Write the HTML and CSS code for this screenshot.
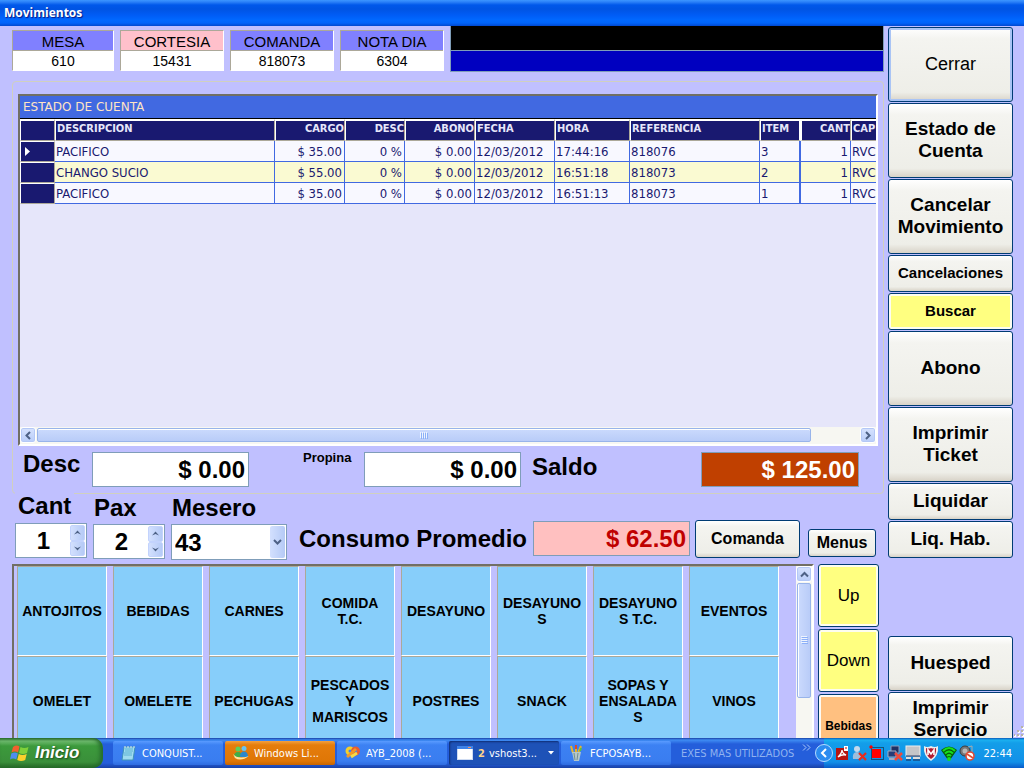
FILE: index.html
```html
<!DOCTYPE html>
<html lang="es">
<head>
<meta charset="utf-8">
<title>Movimientos</title>
<link rel="stylesheet" href="styles.css">
</head>
<body>
<header class="titlebar">Movimientos</header>

<main class="window">
  <div class="work">
    <section class="summary">
      <dl class="tag tag-w1"><dt>MESA</dt><dd>610</dd></dl>
      <dl class="tag tag-pink"><dt>CORTESIA</dt><dd>15431</dd></dl>
      <dl class="tag"><dt>COMANDA</dt><dd>818073</dd></dl>
      <dl class="tag"><dt>NOTA DIA</dt><dd>6304</dd></dl>
      <div class="display"><div class="display-top"></div><div class="display-bottom"></div></div>
    </section>

    <section class="group">
      <div class="grid">
        <div class="grid-caption">ESTADO DE CUENTA</div>
        <div class="grid-view">
          <table class="rows">
            <colgroup><col class="c-head"><col class="c-desc"><col class="c-70"><col class="c-60"><col class="c-70"><col class="c-80"><col class="c-75"><col class="c-130"><col class="c-item"><col class="c-cant"><col class="c-70"></colgroup>
            <thead>
              <tr><th></th><th>DESCRIPCION</th><th class="num">CARGO</th><th class="num">DESC</th><th class="num">ABONO</th><th>FECHA</th><th>HORA</th><th>REFERENCIA</th><th class="thick">ITEM</th><th class="num">CANT</th><th>CAP</th></tr>
            </thead>
            <tbody>
              <tr><th><svg class="marker" width="5" height="9" viewBox="0 0 5 9"><path d="M0 0L5 4.500L0 9Z" fill="#fff"/></svg></th><td>PACIFICO</td><td class="num">$ 35.00</td><td class="num">0 %</td><td class="num">$ 0.00</td><td>12/03/2012</td><td>17:44:16</td><td>818076</td><td class="thick">3</td><td class="num">1</td><td>RVC</td></tr>
              <tr><th></th><td>CHANGO SUCIO</td><td class="num">$ 55.00</td><td class="num">0 %</td><td class="num">$ 0.00</td><td>12/03/2012</td><td>16:51:18</td><td>818073</td><td class="thick">2</td><td class="num">1</td><td>RVC</td></tr>
              <tr><th></th><td>PACIFICO</td><td class="num">$ 35.00</td><td class="num">0 %</td><td class="num">$ 0.00</td><td>12/03/2012</td><td>16:51:13</td><td>818073</td><td class="thick">1</td><td class="num">1</td><td>RVC</td></tr>
            </tbody>
          </table>
        </div>
        <div class="hscroll">
          <button class="sbtn" aria-label="Izquierda"><svg width="8" height="9" viewBox="0 0 8 9"><path d="M6 1L2.500 4.500L6 8" class="chev"/></svg></button>
          <div class="hthumb"><svg width="9" height="7" viewBox="0 0 9 7"><path d="M.5 0V6M2.500 0V6M4.500 0V6M6.500 0V6" stroke="#eef4fe"/><path d="M1.500 1V7M3.500 1V7M5.500 1V7M7.500 1V7" stroke="#8cb0f8"/></svg></div>
          <div class="hspace"></div>
          <button class="sbtn" aria-label="Derecha"><svg width="8" height="9" viewBox="0 0 8 9"><path d="M2 1L5.500 4.500L2 8" class="chev"/></svg></button>
        </div>
      </div>

      <div class="totals">
        <label class="big lbl-desc" for="desc">Desc</label>
        <input class="money" id="desc" value="$ 0.00">
        <label class="small lbl-propina" for="propina">Propina</label>
        <input class="money" id="propina" value="$ 0.00">
        <label class="big lbl-saldo" for="saldo">Saldo</label>
        <input class="money saldo" id="saldo" value="$ 125.00">
      </div>
    </section>

    <section class="order">
      <div class="field field-cant">
        <label class="big" for="cant">Cant</label>
        <div class="spin"><input id="cant" type="number" value="1">
          <div class="spin-btns"><button aria-label="Más"><svg width="7" height="5" viewBox="0 0 7 5"><path d="M0 4.500L3.500 .5L7 4.500L3.500 3Z" fill="#4d6185"/></svg></button><button aria-label="Menos"><svg width="7" height="5" viewBox="0 0 7 5"><path d="M0 .5L3.500 4.500L7 .5L3.500 2Z" fill="#4d6185"/></svg></button></div></div>
      </div>
      <div class="field field-pax">
        <label class="big" for="pax">Pax</label>
        <div class="spin"><input id="pax" type="number" value="2">
          <div class="spin-btns"><button aria-label="Más"><svg width="7" height="5" viewBox="0 0 7 5"><path d="M0 4.500L3.500 .5L7 4.500L3.500 3Z" fill="#4d6185"/></svg></button><button aria-label="Menos"><svg width="7" height="5" viewBox="0 0 7 5"><path d="M0 .5L3.500 4.500L7 .5L3.500 2Z" fill="#4d6185"/></svg></button></div></div>
      </div>
      <div class="field">
        <label class="big" for="mesero">Mesero</label>
        <div class="combo"><select id="mesero"><option>43</option></select><span class="combo-btn"><svg width="9" height="7" viewBox="0 0 9 7"><path d="M1 1L4.500 4.500L8 1" class="chev"/></svg></span></div>
      </div>
      <label class="big lbl-consumo" for="consumo">Consumo Promedio</label>
      <input class="money consumo" id="consumo" value="$ 62.50">
      <button class="btn btn-comanda">Comanda</button>
      <button class="btn btn-menus">Menus</button>
    </section>

    <section class="menu">
      <div class="menu-panel">
        <div class="tiles">
          <button class="tile">ANTOJITOS</button><button class="tile">BEBIDAS</button><button class="tile">CARNES</button><button class="tile">COMIDA<br>T.C.</button><button class="tile">DESAYUNO</button><button class="tile">DESAYUNO<br>S</button><button class="tile">DESAYUNO<br>S T.C.</button><button class="tile">EVENTOS</button>
          <button class="tile">OMELET</button><button class="tile">OMELETE</button><button class="tile">PECHUGAS</button><button class="tile">PESCADOS<br>Y<br>MARISCOS</button><button class="tile">POSTRES</button><button class="tile">SNACK</button><button class="tile">SOPAS Y<br>ENSALADA<br>S</button><button class="tile">VINOS</button>
        </div>
        <div class="vscroll">
          <button class="sbtn" aria-label="Arriba"><svg width="9" height="7" viewBox="0 0 9 7"><path d="M1 5.500L4.500 2L8 5.500" class="chev"/></svg></button>
          <div class="vthumb"><svg width="7" height="9" viewBox="0 0 7 9"><path d="M0 .5H6M0 2.500H6M0 4.500H6M0 6.500H6" stroke="#eef4fe"/><path d="M1 1.500H7M1 3.500H7M1 5.500H7M1 7.500H7" stroke="#8cb0f8"/></svg></div>
        </div>
      </div>
      <div class="pager">
        <button class="btn yellow">Up</button>
        <button class="btn yellow">Down</button>
        <button class="btn orange">Bebidas</button>
      </div>
    </section>
  </div>

  <aside class="actions">
    <button class="btn tall close">Cerrar</button>
    <button class="btn tall">Estado de<br>Cuenta</button>
    <button class="btn tall">Cancelar<br>Movimiento</button>
    <button class="btn low text-15">Cancelaciones</button>
    <button class="btn low text-15 yellow">Buscar</button>
    <button class="btn tall">Abono</button>
    <button class="btn tall">Imprimir<br>Ticket</button>
    <button class="btn low">Liquidar</button>
    <button class="btn low">Liq. Hab.</button>
    <button class="btn mid apart">Huesped</button>
    <button class="btn mid">Imprimir<br>Servicio</button>
  </aside>
  <svg class="grip" width="10" height="12" viewBox="0 0 10 12"><path d="M9 1v2M9 5v2M9 9v2M5 5v2M5 9v2M1 9v2" stroke="#fff" stroke-width="2"/><path d="M8 0v2M8 4v2M8 8v2M4 4v2M4 8v2M0 8v2" stroke="#b8b4a4" stroke-width="2"/></svg>
</main>

<footer class="taskbar">
  <button class="start">
    <svg width="20" height="18" viewBox="0 0 20 18"><path d="M3 3Q6.500 .5 9.500 2.500L8 8.500Q5 6.500 1.500 8.500Z" fill="#f2602e"/><path d="M10.500 3Q14 5 18.500 3L17 9Q13 11 9 9Z" fill="#7fd03a"/><path d="M1.300 9.500Q5 7.500 7.800 9.500L6.300 15.500Q3 13.500 0 15.500Z" fill="#4d8df0"/><path d="M8.800 10Q12.500 12 16.700 10L15.200 16Q11 18 7.200 16Z" fill="#fbd02c"/></svg>
    Inicio
  </button>
  <nav class="tasks">
    <button class="task"><svg width="16" height="16" viewBox="0 0 16 16"><path d="M3 2H14L12 15H1Z" fill="#9fdcf0" stroke="#3e92b8"/><path d="M4 4H12M4 6H12M3 8H11M3 10H11" stroke="#5db2d2"/><path d="M4 1V3M7 1V3M10 1V3M13 1V3" stroke="#dfe8ee"/></svg>CONQUIST...</button>
    <button class="task alert"><svg width="16" height="16" viewBox="0 0 16 16"><circle cx="5" cy="4" r="2.500" fill="#5ccf5a"/><path d="M1 12Q1 7 5 7T9 12Z" fill="#3fae48"/><circle cx="11" cy="3.500" r="2.500" fill="#67c4f2"/><path d="M7 12Q7 6.500 11 6.500T15 12Z" fill="#2c87cc"/><path d="M0 9Q5 15 16 11Q8 17 2 13Z" fill="#ffe5a0"/></svg>Windows Li...</button>
    <button class="task"><svg width="16" height="16" viewBox="0 0 16 16"><g fill="none" stroke-width="3"><circle cx="5" cy="6" r="3" stroke="#f4cf2b"/><circle cx="10.500" cy="6" r="3" stroke="#e95d31"/><path d="M2 12L11 4" stroke="#f39a26"/><path d="M6 12L12 8" stroke="#f5da47"/></g></svg>AYB_2008 (...</button>
    <button class="task active"><svg width="16" height="14" viewBox="0 0 16 14"><rect x=".5" y=".5" width="15" height="13" fill="#fff" stroke="#cfdcf2"/><path d="M0 0H16V3H0Z" fill="#3f83e8"/><path d="M11 1h3v1h-3z" fill="#f49262"/></svg><b>2</b> vshost3...<svg class="drop" width="6" height="4" viewBox="0 0 6 4"><path d="M0 0H6L3 3.500Z" fill="#fff"/></svg></button>
    <button class="task"><svg width="16" height="16" viewBox="0 0 16 16"><path d="M4 8L2 1M7 8V0M9 8L12 1" stroke="#e7b32d" stroke-width="2"/><path d="M7 4V0" stroke="#e14b26" stroke-width="2"/><path d="M12 3L11 6" stroke="#5fbf3c" stroke-width="2"/><path d="M3 7H12L10 16H5Z" fill="#b5c7c8"/><path d="M5 8L6 15M9 8L8 15" stroke="#748e90"/></svg>FCPOSAYB...</button>
  </nav>
  <div class="toolbar"><span>EXES MAS UTILIZADOS</span><svg width="9" height="7" viewBox="0 0 9 7"><path d="M1 .5L4 3.500L1 6.500M5 .5L8 3.500L5 6.500" fill="none" stroke="#a9c8fa"/></svg></div>
  <div class="tray">
    <button class="tray-arrow" aria-label="Mostrar iconos"><svg width="18" height="18" viewBox="0 0 18 18"><circle cx="9" cy="9" r="8.500" fill="#2b8cf0" stroke="#b5dcff"/><path d="M11 5L7 9L11 13" fill="none" stroke="#fff" stroke-width="2"/></svg></button>
    <svg width="14" height="16" viewBox="0 0 14 16"><path d="M1 3H10L13 6V15H1Z" fill="#b81410"/><path d="M3 12Q7 8 7 5Q7 8 11 10Q7 9 3 12" fill="none" stroke="#fff" stroke-width="1.300"/><path d="M9 1H13V6H9Z" fill="#fff"/><path d="M10 3H12" stroke="#c00"/></svg>
    <svg width="16" height="16" viewBox="0 0 16 16"><circle cx="6" cy="4" r="3" fill="#c3d9ed"/><path d="M2 14Q1 7 6 7T10 14Z" fill="#9fbedb"/><path d="M8 8L15 15M15 8L8 15" stroke="#e82b1d" stroke-width="2.200"/></svg>
    <svg width="16" height="16" viewBox="0 0 16 16"><rect x="2.500" y="2.500" width="12" height="12" fill="none" stroke="#111" stroke-dasharray="1 1"/><path d="M3 4H12V13H3Z" fill="#f00"/><circle cx="2" cy="2" r="1.700" fill="#f00"/></svg>
    <svg width="16" height="16" viewBox="0 0 16 16"><path d="M4 1H12V8H4Z" fill="#1e3064" stroke="#8f9cb8"/><path d="M1 6H9V12H1Z" fill="#273d78" stroke="#a2adc4"/><path d="M2 14H8" stroke="#a2adc4" stroke-width="2"/><path d="M8 8L15 15M15 8L8 15" stroke="#ee4a3d" stroke-width="2.500"/></svg>
    <svg width="16" height="16" viewBox="0 0 16 16"><rect x="1" y="1" width="14" height="10" fill="#c5c5c8" stroke="#eee"/><path d="M1 11H15M1 15H6M8 15H15" stroke="#1d2855"/><path d="M1 13H6M8 13H15" stroke="#ddd" stroke-width="2"/></svg>
    <svg width="16" height="16" viewBox="0 0 16 16"><path d="M1 1Q4 3 8 1Q12 3 15 1Q16 11 8 16Q0 11 1 1Z" fill="#eee"/><path d="M3 3Q6 4 8 3Q10 4 13 3Q14 10 8 14Q2 10 3 3Z" fill="#b21b30"/><path d="M5 10V5L8 9L11 5V10" fill="none" stroke="#fff" stroke-width="1.600"/></svg>
    <svg width="16" height="16" viewBox="0 0 16 16"><path d="M0 5Q8 -2 16 5L9 15H7Z" fill="#075c0a"/><path d="M2 6Q8 0 14 6M4 8.500Q8 4.500 12 8.500M6 11Q8 9 10 11" fill="none" stroke="#16df1d" stroke-width="2"/><circle cx="8" cy="14" r="2" fill="#16df1d"/></svg>
    <svg width="16" height="16" viewBox="0 0 16 16"><circle cx="6" cy="6" r="5" fill="#777" stroke="#3c3c3c"/><circle cx="6" cy="6" r="2.500" fill="#b8b8b8"/><path d="M9 2L13 1V7" fill="none" stroke="#aaa"/><circle cx="11" cy="11" r="4" fill="#fff" stroke="#e04b35" stroke-width="1.600"/><path d="M8 9L14 13" stroke="#e04b35" stroke-width="1.600"/></svg>
    <time>22:44</time>
  </div>
</footer>
</body>
</html>
```

FILE: styles.css
```css
* { box-sizing: border-box; }

body {
  margin: 0;
  height: 100vh;
  display: flex;
  flex-direction: column;
  overflow: hidden;
  background: #c0c0ff;
  color: #000;
  font-family: "Liberation Sans", Arial, sans-serif;
}

button, input, select { font: inherit; color: inherit; margin: 0; padding: 0; border-radius: 0; }
svg { display: block; flex: none; }
.chev { fill: none; stroke: #4d6185; stroke-width: 2; }

.titlebar {
  flex: 0 0 26px;
  padding-left: 4px;
  line-height: 26px;
  font-family: "Open Sans", sans-serif;
  font-size: 12px;
  font-weight: bold;
  color: #fff;
  text-shadow: 1px 1px 1px #0a1883;
  background: linear-gradient(#3c96ff 0, #2a80f8 2px, #0058ea 5px, #0054e3 9px, #005cf5 15px, #0068ff 20px, #0064fa 23px, #0048d0 26px);
}

.window { position: relative; flex: 1; min-height: 0; display: flex; gap: 4px; padding-right: 11px; overflow: hidden; }
.work { flex: 1; min-width: 0; display: flex; flex-direction: column; }

/* Account tags */
.summary { display: flex; align-items: flex-start; gap: 6px; padding-left: 12px; }
.tag { flex: 0 0 104px; margin: 4px 0 0; border: 1px solid #fff; border-top-color: #aca899; border-left-color: #aca899; text-align: center; }
.tag-w1 { flex-basis: 102px; }
.tag dt { height: 20px; line-height: 22px; font-size: 15px; background: #8080ff; border-bottom: 1px solid #aca899; }
.tag dd { height: 19px; line-height: 20px; margin: 0; font-size: 14px; background: #fff; }
.tag-pink dt { background: #ffc0cb; }
.display { flex: 1; border: 1px solid #7f9db9; border-top: 0; }
.display-top { height: 25px; background: #000; border-bottom: 1px solid #7f9db9; }
.display-bottom { height: 20px; background: #0000c0; }

/* Statement group */
.group {
  flex: 1;
  min-height: 0;
  display: flex;
  flex-direction: column;
  margin: 9px 0 0 12px;
  padding: 12px 5px 6px;
  border: 1px solid #d0d0bf;
  border-radius: 4px;
}
.grid {
  flex: 1;
  min-height: 0;
  display: flex;
  flex-direction: column;
  background: #e6e6fa;
  border: 2px solid #716f64;
  border-right-color: #fff;
  border-bottom-color: #fff;
}
.grid-caption {
  flex: 0 0 23px;
  padding-left: 3px;
  line-height: 22px;
  font-family: "DejaVu Sans", sans-serif;
  font-size: 12px;
  color: #ffe4c4;
  background: #4169e1;
  border-bottom: 1px solid #000;
}
.grid-view { flex: 1; overflow: hidden; }

.rows { width: 901px; table-layout: fixed; border-collapse: separate; border-spacing: 0; font-family: "DejaVu Sans Condensed", "DejaVu Sans", sans-serif; font-size: 13px; color: #191970; }
.c-head { width: 35px; }
.c-desc { width: 220px; }
.c-60 { width: 60px; }
.c-70 { width: 70px; }
.c-75 { width: 75px; }
.c-80 { width: 80px; }
.c-130 { width: 130px; }
.c-item { width: 41px; }
.c-cant { width: 50px; }
.rows th, .rows td { height: 21px; padding: 0 1px; white-space: nowrap; text-align: left; font-weight: normal; line-height: 19px; }
.rows th { background: #191970; border: 1px solid #aca899; border-top-color: #fff; border-left-color: #fff; }
.rows thead th { height: 22px; padding: 0 1px 2px; line-height: 15px; border-top-width: 2px; font-size: 11px; font-weight: bold; color: #e6e6fa; overflow: hidden; vertical-align: top; }
.rows thead .num { padding-right: 0; }
.rows td { background: #f8f8ff; border-right: 1px solid #4169e1; border-bottom: 1px solid #4169e1; }
.rows tbody tr:nth-child(even) td { background: #fafad2; }
.rows .num { text-align: right; }
.rows td.num { padding-right: 2px; }
.rows td.thick { border-right-width: 2px; }
.rows th.thick { border-right: 2px solid #fff; }
.marker { margin-left: 3px; }

/* Scrollbars */
.sbtn { display: flex; align-items: center; justify-content: center; flex: 0 0 16px; border: 1px solid #fff; border-radius: 3px; background: linear-gradient(#d6e2fe, #b9cdf9); box-shadow: inset 0 0 0 1px #b4c8f6; }
.hscroll { flex: 0 0 17px; display: flex; padding-bottom: 1px; background: #f7f7f2; }
.hthumb { flex: 1; display: flex; align-items: center; justify-content: center; margin: 1px 0 1px 1px; border: 1px solid #98b4ea; border-radius: 2px; background: linear-gradient(#cbdafd, #b9ccf8); box-shadow: inset 0 1px #fff; }
.hspace { flex: 0 0 49px; }
.vscroll { flex: 0 0 16px; display: flex; flex-direction: column; background: #f7f7f2; }
.vthumb { flex: 0 0 115px; display: flex; align-items: center; justify-content: center; margin: 1px 1px 0; border: 1px solid #98b4ea; border-radius: 2px; background: linear-gradient(90deg, #cbdafd, #b9ccf8); box-shadow: inset 1px 0 #fff; }

/* Totals */
.big { font-size: 24px; font-weight: bold; line-height: 24px; white-space: nowrap; }
.small { font-size: 13px; font-weight: bold; line-height: 12px; }
.totals { display: flex; align-items: flex-start; padding: 6px 19px 0 5px; }
.lbl-desc { flex: 0 0 69px; }
.lbl-propina { flex: 0 0 61px; margin-left: 54px; }
.lbl-saldo { margin: 3px auto 0 11px; }
.money { flex: 0 0 157px; width: 157px; height: 35px; padding: 0 3px; text-align: right; font-size: 24px; font-weight: bold; background: #fff; border: 1px solid #7f9db9; }
.saldo { flex-basis: 158px; color: #fff; background: #c04000; }

/* Order line */
.order { display: flex; align-items: flex-end; padding: 0 8px 4px 15px; margin-top: -2px; }
.field { display: flex; flex-direction: column; gap: 2px; margin-right: 6px; }
.field .big { position: relative; align-self: flex-start; padding: 2px 1px; background: #c0c0ff; }
.field-cant { gap: 3px; margin-bottom: 2px; }
.field-cant .big { padding: 2px 3px; }
.field-pax { margin-bottom: 1px; }
.spin { width: 72px; height: 35px; display: flex; padding: 1px; background: #fff; border: 1px solid #7f9db9; }
.spin input { flex: 1; min-width: 0; border: 0; background: none; text-align: center; font-size: 24px; font-weight: bold; appearance: textfield; -moz-appearance: textfield; }
.spin input::-webkit-inner-spin-button { appearance: none; -webkit-appearance: none; margin: 0; }
.spin-btns { flex: 0 0 15px; display: flex; flex-direction: column; }
.spin-btns button { flex: 1; display: flex; align-items: center; justify-content: center; border: 1px solid #c3d3fd; border-radius: 2px; background: linear-gradient(90deg, #d3e0fe, #b5caf6); }
.combo { position: relative; width: 116px; height: 36px; }
.combo select { width: 100%; height: 100%; padding-left: 3px; font-size: 24px; font-weight: bold; appearance: none; -webkit-appearance: none; background: #fff; border: 1px solid #7f9db9; }
.combo-btn { position: absolute; top: 2px; right: 2px; bottom: 2px; width: 15px; display: flex; align-items: center; justify-content: center; pointer-events: none; border-radius: 2px; background: linear-gradient(90deg, #d3e0fe, #b5caf6); }
.lbl-consumo { margin: 0 auto 9px 6px; }
.consumo { color: #c00000; background: #ffc0c0; margin: 0 5px 4px 0; }
.btn-comanda { width: 105px; height: 38px; font-size: 16px; margin: 0 8px 2px 0; }
.btn-menus { width: 68px; height: 28px; font-size: 16px; margin-bottom: 3px; }

/* Buttons */
.btn {
  flex-shrink: 0;
  border: 1px solid #003c74;
  border-radius: 3px;
  background: linear-gradient(#fff, #f4f4f0 15%, #eeeee8 88%, #d8d3c8);
  font-weight: bold;
}
.btn.yellow { background: #ffff80; box-shadow: inset 0 0 0 2px #fdfdf0; }
.btn.orange { background: #ffc080; box-shadow: inset 0 0 0 2px #fdfaf4; }

.actions { flex: 0 0 125px; display: flex; flex-direction: column; gap: 1px; padding-top: 1px; overflow: hidden; font-size: 19px; line-height: 22px; }
.tall { height: 75px; padding-bottom: 2px; }
.low { height: 37px; padding-bottom: 2px; }
.mid { height: 55px; padding-bottom: 2px; }
.text-15 { font-size: 15px; }
.apart { margin-top: 77px; }
.close { font-size: 18px; font-weight: normal; box-shadow: inset 0 0 0 2px #a9c4f5; }

/* Menu */
.menu { flex: 0 0 174px; display: flex; gap: 4px; padding: 0 5px 0 12px; overflow: hidden; }
.menu-panel { flex: 1; min-width: 0; display: flex; padding-left: 3px; border: 2px solid #716f64; border-right-color: #fff; border-bottom: 0; overflow: hidden; }
.tiles { flex: 1; display: grid; grid-template-columns: repeat(auto-fill, 90px); grid-auto-rows: 90px; column-gap: 6px; }
.tile { border: 1px solid #aca899; border-right-color: #fff; border-bottom-color: #fff; background: #87cefa; font-size: 14px; font-weight: bold; line-height: 16px; }
.pager { flex: 0 0 61px; display: flex; flex-direction: column; gap: 2px; }
.pager .btn { height: 63px; font-size: 17px; font-weight: normal; }
.pager .orange { font-size: 12px; font-weight: bold; }
.grip { position: absolute; right: 0; bottom: 0; }

/* Taskbar */
.taskbar {
  flex: 0 0 30px;
  display: flex;
  overflow: hidden;
  color: #fff;
  font-family: "DejaVu Sans Condensed", "DejaVu Sans", sans-serif;
  font-size: 11px;
  background: linear-gradient(#1941a5 0, #3f8cf3 2px, #245edb 6px, #245edb 25px, #1941a5 30px);
}
.start {
  flex: 0 0 103px;
  display: flex;
  align-items: center;
  gap: 5px;
  padding-left: 10px;
  border: 0;
  border-radius: 0 10px 10px 0;
  font-family: "Liberation Sans", Arial, sans-serif;
  font-size: 17px;
  font-weight: bold;
  font-style: italic;
  text-shadow: 1px 1px 2px #1b4a1b;
  background: linear-gradient(#2d6b2d 0, #6fbb6f 3px, #3c9a3c 8px, #3a8f3a 24px, #256825 30px);
  box-shadow: inset -3px 0 4px #256b2b;
}
.tasks { display: flex; gap: 2px; padding: 3px 0 3px 10px; }
.task { width: 110px; display: flex; align-items: center; gap: 4px; padding-left: 8px; border: 0; border-radius: 2px; white-space: nowrap; background: linear-gradient(#5a9bff, #3c81f3 4px, #3a7df0 20px, #2f6ce0); }
.task svg { margin-right: 1px; }
.task.alert { background: linear-gradient(#f3a140, #e57d0c 4px, #df7606 20px, #c76400); }
.task.active { background: #1e52b7; box-shadow: inset 1px 1px 2px #102d73; }
.task b { color: #ffd38a; }
.task .drop { margin: 0 5px 0 auto; }
.toolbar { flex: 1; display: flex; align-items: center; gap: 8px; padding-left: 10px; color: #8fb2f0; white-space: nowrap; }
.toolbar svg { margin-bottom: 12px; }
.tray {
  flex: 0 0 200px;
  display: flex;
  align-items: center;
  gap: 2px;
  padding-right: 12px;
  background: linear-gradient(#0c59b9 0, #1bb0f0 2px, #139ee9 5px, #1290e8 24px, #095bc9 30px);
}
.tray-arrow { flex: 0 0 18px; margin-left: -9px; border: 0; background: none; }
.tray time { margin-left: auto; }
```
